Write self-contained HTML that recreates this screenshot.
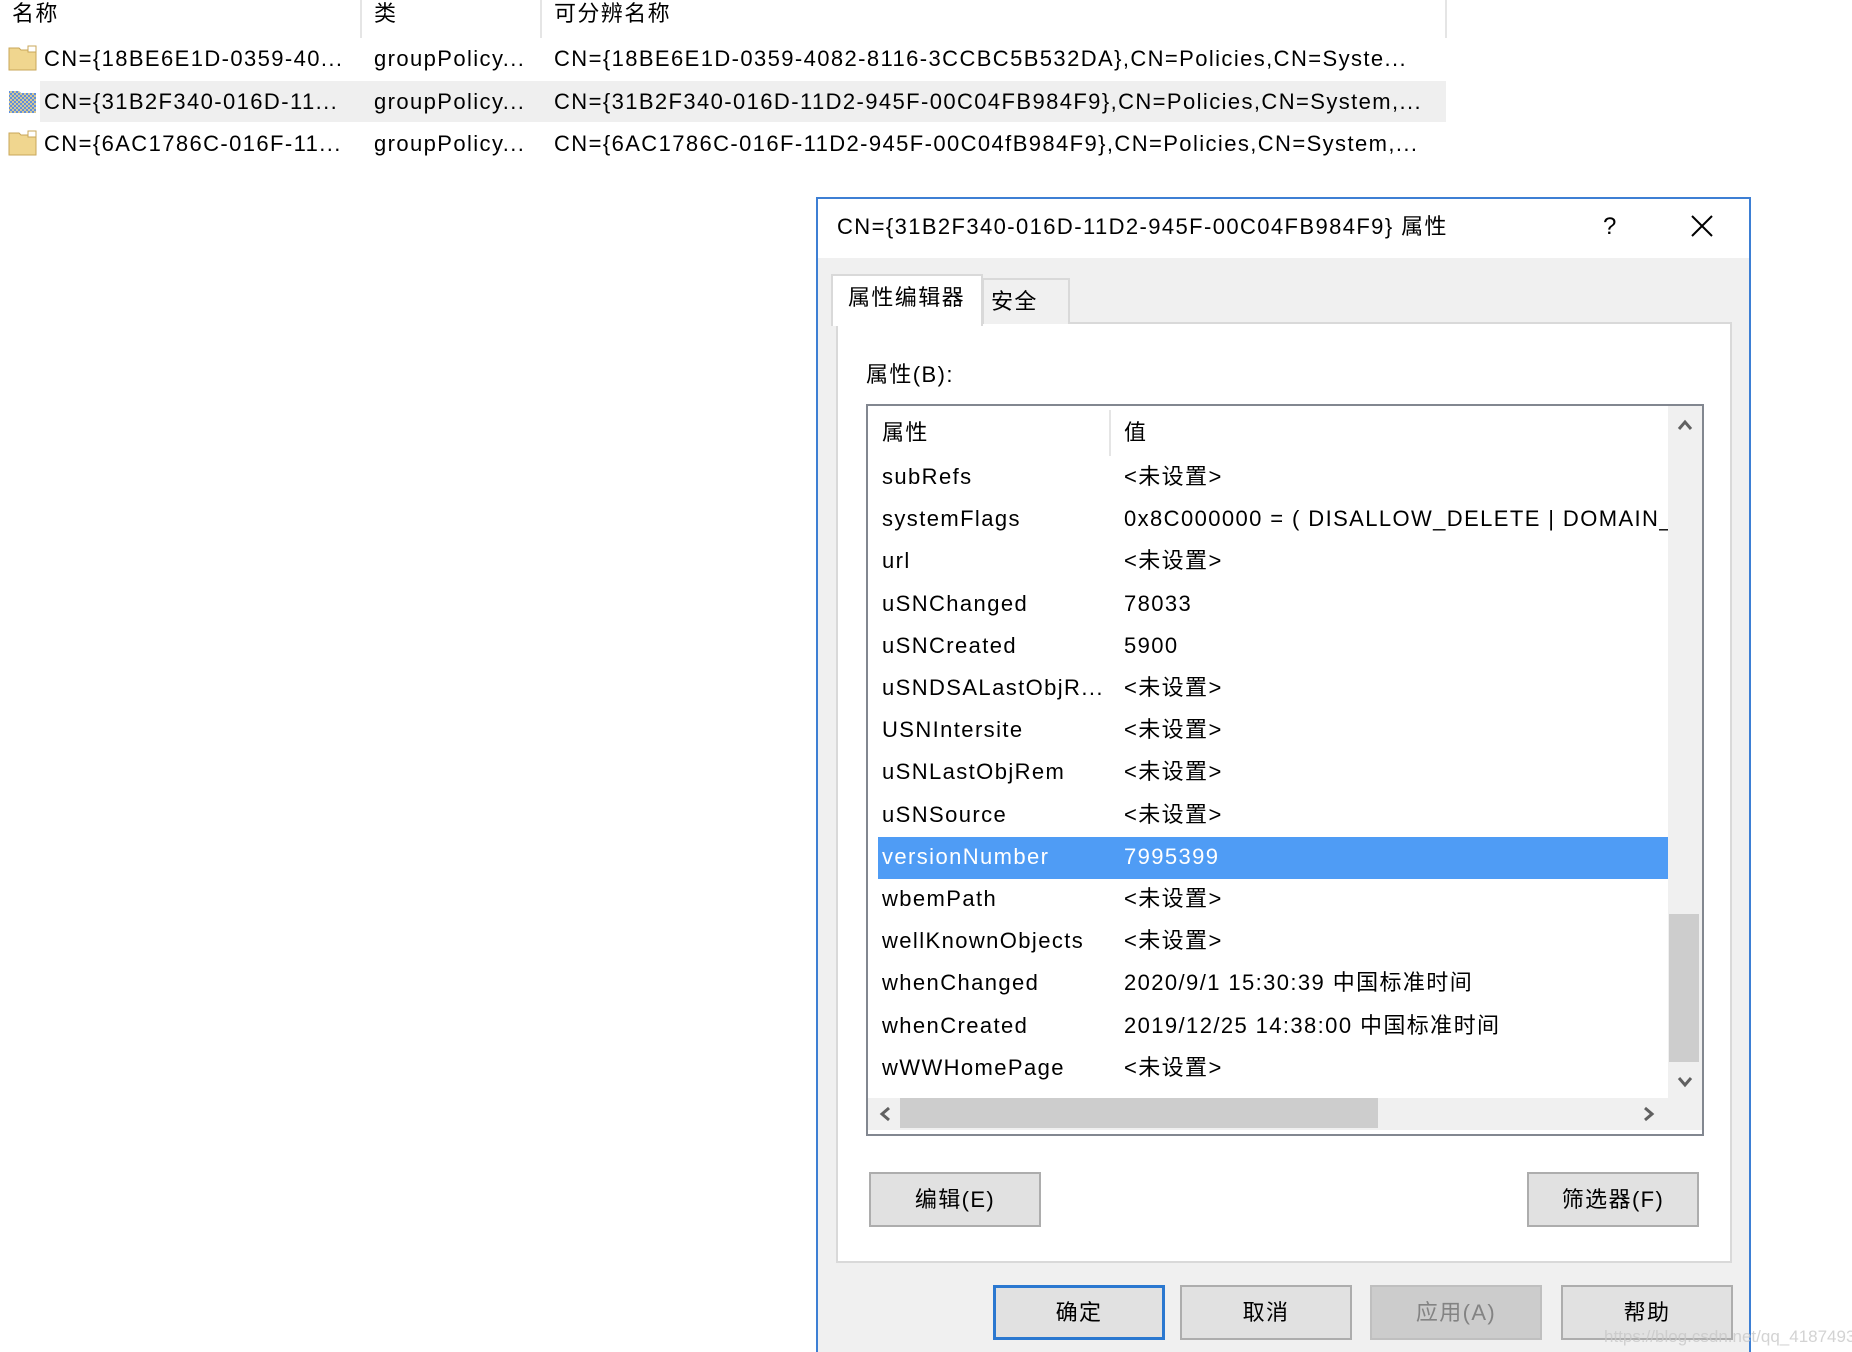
<!DOCTYPE html>
<html style="width:1852px;height:1352px;overflow:hidden"><head><meta charset="utf-8"><style>
*{margin:0;padding:0;box-sizing:border-box}
body{width:1852px;height:1352px;background:#fff;position:relative;overflow:hidden;font-family:"Liberation Sans","Noto Sans CJK SC",sans-serif;font-size:22px;color:#000;letter-spacing:1.4px}
.a{position:absolute;white-space:nowrap}
.t{line-height:42px;height:42px}
.btn{position:absolute;background:#e1e1e1;border:2px solid #adadad;text-align:center;font-size:22px}
</style></head><body>
<div class="a" style="left:12px;top:-2px;line-height:32px">名称</div>
<div class="a" style="left:374px;top:-2px;line-height:32px">类</div>
<div class="a" style="left:554px;top:-2px;line-height:32px">可分辨名称</div>
<div class="a" style="left:360px;top:0;width:2px;height:38px;background:#e5e5e5"></div>
<div class="a" style="left:540px;top:0;width:2px;height:38px;background:#e5e5e5"></div>
<div class="a" style="left:1445px;top:0;width:2px;height:38px;background:#e5e5e5"></div>
<div class="a" style="left:40px;top:81px;width:1406px;height:41px;background:#efefef"></div>
<svg class="a" style="left:8px;top:44px" width="30" height="28"><path d="M1 4h10l2 2h15v20H1z" fill="#f0d68f" stroke="#c9a75a"/><rect x="20" y="2" width="8" height="6" fill="#fff" stroke="#c9a75a"/></svg>
<svg class="a" style="left:8px;top:87px" width="30" height="28"><defs><pattern id="p" width="4" height="4" patternUnits="userSpaceOnUse"><rect width="4" height="4" fill="#d8c78f"/><rect width="2" height="2" fill="#5d8fe0"/><rect x="2" y="2" width="2" height="2" fill="#5d8fe0"/></pattern></defs><path d="M1 4h10l2 2h15v20H1z" fill="url(#p)"/></svg>
<svg class="a" style="left:8px;top:129px" width="30" height="28"><path d="M1 4h10l2 2h15v20H1z" fill="#f0d68f" stroke="#c9a75a"/><rect x="20" y="2" width="8" height="6" fill="#fff" stroke="#c9a75a"/></svg>
<div class="a t" style="left:44px;top:38px">CN={18BE6E1D-0359-40...</div>
<div class="a t" style="left:374px;top:38px">groupPolicy...</div>
<div class="a t" style="left:554px;top:38px">CN={18BE6E1D-0359-4082-8116-3CCBC5B532DA},CN=Policies,CN=Syste...</div>
<div class="a t" style="left:44px;top:81px">CN={31B2F340-016D-11...</div>
<div class="a t" style="left:374px;top:81px">groupPolicy...</div>
<div class="a t" style="left:554px;top:81px">CN={31B2F340-016D-11D2-945F-00C04FB984F9},CN=Policies,CN=System,...</div>
<div class="a t" style="left:44px;top:123px">CN={6AC1786C-016F-11...</div>
<div class="a t" style="left:374px;top:123px">groupPolicy...</div>
<div class="a t" style="left:554px;top:123px">CN={6AC1786C-016F-11D2-945F-00C04fB984F9},CN=Policies,CN=System,...</div>

<div class="a" style="left:816px;top:197px;width:935px;height:1155px;background:#f0f0f0;border:2px solid #3d7fd4;border-bottom:none"></div>
<div class="a" style="left:818px;top:199px;width:931px;height:59px;background:#fff"></div>
<div class="a" style="left:837px;top:210px;line-height:34px;font-size:22px">CN={31B2F340-016D-11D2-945F-00C04FB984F9} 属性</div>
<div class="a" style="left:1603px;top:210px;line-height:34px;font-size:24px">?</div>
<svg class="a" style="left:1689px;top:213px" width="26" height="26"><path d="M3 3L23 23M23 3L3 23" stroke="#000" stroke-width="2"/></svg>
<div class="a" style="left:836px;top:322px;width:896px;height:941px;background:#fff;border:2px solid #d9d9d9"></div>
<div class="a" style="left:982px;top:278px;width:88px;height:46px;background:#f0f0f0;border:2px solid #d9d9d9;border-bottom:none"></div>
<div class="a" style="left:991px;top:284px;line-height:36px">安全</div>
<div class="a" style="left:831px;top:274px;width:152px;height:52px;background:#fff;border:2px solid #d9d9d9;border-bottom:none"></div>
<div class="a" style="left:848px;top:280px;line-height:36px">属性编辑器</div>
<div class="a" style="left:866px;top:357px;line-height:36px">属性(B):</div>
<div class="a" style="left:866px;top:404px;width:838px;height:732px;border:2px solid #828790;background:#fff"></div>
<div class="a" style="left:1109px;top:410px;width:2px;height:46px;background:#e5e5e5"></div>
<div class="a t" style="left:882px;top:410px;height:46px;line-height:46px">属性</div>
<div class="a t" style="left:1124px;top:410px;height:46px;line-height:46px">值</div>
<div class="a" style="left:878px;top:837px;width:790px;height:42px;background:#4f9cf5"></div>
<div class="a" style="left:882px;top:456px;line-height:42.2px">subRefs<br>systemFlags<br>url<br>uSNChanged<br>uSNCreated<br>uSNDSALastObjR...<br>USNIntersite<br>uSNLastObjRem<br>uSNSource<br><span style="color:#fff">versionNumber</span><br>wbemPath<br>wellKnownObjects<br>whenChanged<br>whenCreated<br>wWWHomePage</div>
<div class="a" style="left:1124px;top:456px;line-height:42.2px;width:544px;overflow:hidden">&lt;未设置&gt;<br>0x8C000000 = ( DISALLOW_DELETE | DOMAIN_<br>&lt;未设置&gt;<br>78033<br>5900<br>&lt;未设置&gt;<br>&lt;未设置&gt;<br>&lt;未设置&gt;<br>&lt;未设置&gt;<br><span style="color:#fff">7995399</span><br>&lt;未设置&gt;<br>&lt;未设置&gt;<br>2020/9/1 15:30:39 中国标准时间<br>2019/12/25 14:38:00 中国标准时间<br>&lt;未设置&gt;</div>
<div class="a" style="left:1668px;top:406px;width:34px;height:692px;background:#f0f0f0"></div>
<div class="a" style="left:1669px;top:914px;width:30px;height:148px;background:#cdcdcd"></div>
<svg class="a" style="left:1676px;top:418px" width="18" height="14"><path d="M3 11L9 4L15 11" stroke="#606060" stroke-width="3" fill="none"/></svg>
<svg class="a" style="left:1676px;top:1075px" width="18" height="14"><path d="M3 3L9 10L15 3" stroke="#606060" stroke-width="3" fill="none"/></svg>
<div class="a" style="left:868px;top:1098px;width:800px;height:32px;background:#f0f0f0"></div>
<div class="a" style="left:900px;top:1098px;width:478px;height:30px;background:#cdcdcd"></div>
<div class="a" style="left:1668px;top:1098px;width:34px;height:32px;background:#f0f0f0"></div>
<svg class="a" style="left:878px;top:1105px" width="14" height="18"><path d="M11 3L4 9L11 15" stroke="#606060" stroke-width="3" fill="none"/></svg>
<svg class="a" style="left:1642px;top:1105px" width="14" height="18"><path d="M3 3L10 9L3 15" stroke="#606060" stroke-width="3" fill="none"/></svg>
<div class="btn" style="left:869px;top:1172px;width:172px;height:55px;line-height:51px">编辑(E)</div>
<div class="btn" style="left:1527px;top:1172px;width:172px;height:55px;line-height:51px">筛选器(F)</div>
<div class="btn" style="left:993px;top:1285px;width:172px;height:55px;line-height:49px;border:3px solid #2b78d0">确定</div>
<div class="btn" style="left:1180px;top:1285px;width:172px;height:55px;line-height:51px">取消</div>
<div class="btn" style="left:1370px;top:1285px;width:172px;height:55px;line-height:51px;background:#cccccc;border-color:#bfbfbf;color:#838383">应用(A)</div>
<div class="btn" style="left:1561px;top:1285px;width:172px;height:55px;line-height:51px">帮助</div>
<div class="a" style="left:1604px;top:1327px;font-size:17px;letter-spacing:0;color:rgba(200,200,200,0.8)">https://blog.csdn.net/qq_41874930</div>
</body></html>
